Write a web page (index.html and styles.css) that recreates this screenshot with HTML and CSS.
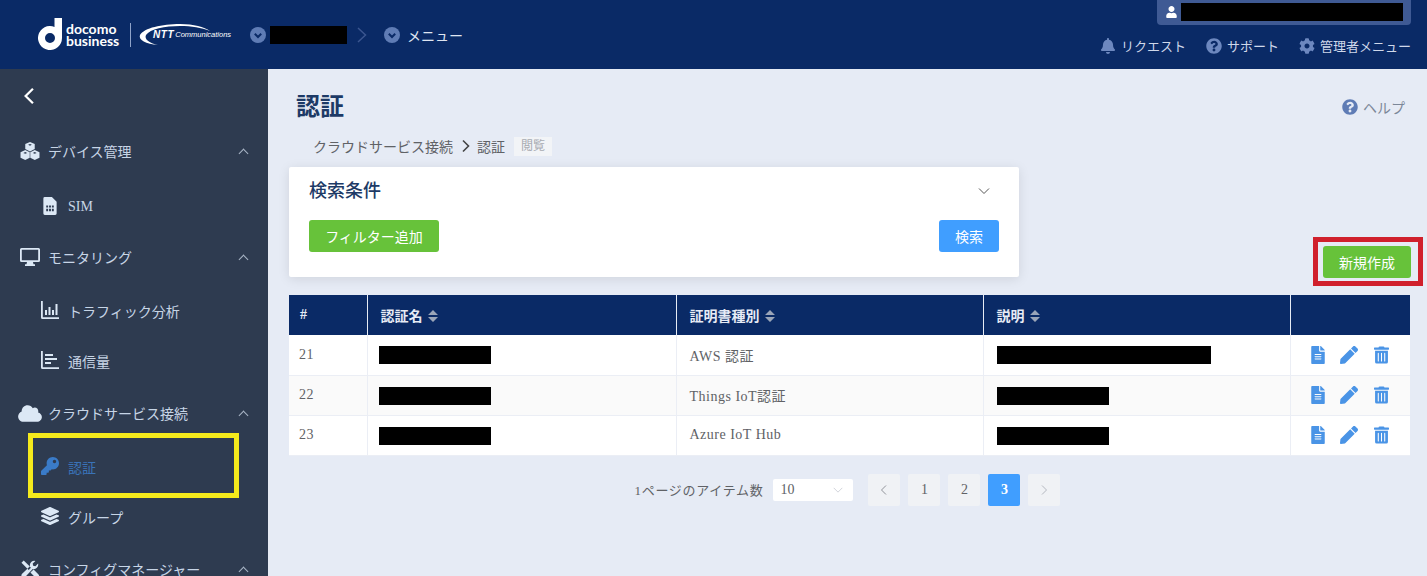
FILE: index.html
```html
<!DOCTYPE html>
<html lang="ja">
<head>
  <meta charset="UTF-8">
  <meta name="viewport" content="width=device-width, initial-scale=1.0">
  <title>認証</title>
  <link rel="stylesheet" href="styles.css">
</head>
<body>
  <svg class="sprite" xmlns="http://www.w3.org/2000/svg">
    <symbol id="i-bell" viewBox="0 0 448 512"><path d="M224 512c35.32 0 63.97-28.65 63.97-64H160.03c0 35.35 28.65 64 63.97 64zm215.39-149.71c-19.32-20.76-55.47-51.99-55.47-154.29 0-77.7-54.48-139.9-127.94-155.16V32c0-17.67-14.32-32-31.98-32s-31.98 14.33-31.98 32v20.84C118.56 68.1 64.08 130.3 64.08 208c0 102.3-36.15 133.53-55.47 154.29-6 6.45-8.66 14.16-8.61 21.71.11 16.4 12.98 32 32.1 32h383.8c19.12 0 32-15.6 32.1-32 .05-7.55-2.61-15.27-8.61-21.71z"/></symbol>
    <symbol id="i-question" viewBox="0 0 512 512"><path d="M504 256c0 136.997-111.043 248-248 248S8 392.997 8 256C8 119.083 119.043 8 256 8s248 111.083 248 248zM262.655 90c-54.497 0-89.255 22.957-116.549 63.758-3.536 5.286-2.353 12.415 2.715 16.258l34.699 26.31c5.205 3.947 12.621 3.008 16.665-2.122 17.864-22.658 30.113-35.797 57.303-35.797 20.429 0 45.698 13.148 45.698 32.958 0 14.976-12.363 22.667-32.534 33.976C247.128 238.528 216 254.941 216 296v4c0 6.627 5.373 12 12 12h56c6.627 0 12-5.373 12-12v-1.333c0-28.462 83.186-29.647 83.186-106.667 0-58.002-60.165-102-116.531-102zM256 338c-25.365 0-46 20.635-46 46 0 25.364 20.635 46 46 46s46-20.636 46-46c0-25.365-20.635-46-46-46z"/></symbol>
    <symbol id="i-cog" viewBox="0 0 512 512"><path d="M487.4 315.7l-42.6-24.6c4.3-23.2 4.3-47 0-70.2l42.6-24.6c4.9-2.8 7.1-8.6 5.5-14-11.1-35.6-30-67.8-54.7-94.6-3.8-4.1-10-5.1-14.8-2.3L380.8 110c-17.9-15.4-38.5-27.3-60.8-35.1V25.8c0-5.6-3.9-10.5-9.4-11.7-36.7-8.2-74.3-7.8-109.2 0-5.5 1.2-9.4 6.1-9.4 11.7V75c-22.2 7.9-42.8 19.8-60.8 35.1L88.7 85.5c-4.9-2.8-11-1.9-14.8 2.3-24.7 26.7-43.6 58.9-54.7 94.6-1.7 5.4.6 11.2 5.5 14L67.3 221c-4.3 23.2-4.3 47 0 70.2l-42.6 24.6c-4.9 2.8-7.1 8.6-5.5 14 11.1 35.6 30 67.8 54.7 94.6 3.8 4.1 10 5.1 14.8 2.3l42.6-24.6c17.9 15.4 38.5 27.3 60.8 35.1v49.2c0 5.6 3.9 10.5 9.4 11.7 36.7 8.2 74.3 7.8 109.2 0 5.5-1.2 9.4-6.1 9.4-11.7v-49.2c22.2-7.9 42.8-19.8 60.8-35.1l42.6 24.6c4.9 2.8 11 1.9 14.8-2.3 24.7-26.7 43.6-58.9 54.7-94.6 1.5-5.5-.7-11.3-5.6-14.1zM256 336c-44.1 0-80-35.9-80-80s35.9-80 80-80 80 35.9 80 80-35.9 80-80 80z"/></symbol>
    <symbol id="i-user" viewBox="0 0 448 512"><path d="M224 256c70.7 0 128-57.3 128-128S294.7 0 224 0 96 57.3 96 128s57.3 128 128 128zm89.6 32h-16.7c-22.2 10.2-46.9 16-72.9 16s-50.6-5.8-72.9-16h-16.7C60.2 288 0 348.2 0 422.4V464c0 26.5 21.5 48 48 48h352c26.5 0 48-21.5 48-48v-41.6c0-74.2-60.2-134.4-134.4-134.4z"/></symbol>
    <symbol id="i-down" viewBox="0 0 16 16"><circle cx="8" cy="8" r="8" fill="#5f7cb5"/><path d="M4.8 6.8 8 10l3.2-3.2" fill="none" stroke="#0a2a66" stroke-width="2"/></symbol>
    <symbol id="i-cubes" viewBox="0 0 20 19"><path d="M10 0l5 2.200v5.300L10 10 5 7.500V2.200z"/><path d="M5 8.500l4.700 2.200v6L5 19 0 16.700v-6z"/><path d="M15 8.500l5 2.200v6L15 19l-4.700-2.300v-6z"/><path fill="#2e3b50" d="M10 3.900l2-1-2-.9-2 .9zM5 12.500l2-1-2-.9-2 .9zM15 12.500l2-1-2-.9-2 .9z"/></symbol>
    <symbol id="i-sim" viewBox="0 0 14 19"><path fill-rule="evenodd" d="M1.500 0h7.500L14 5v12.500a1.500 1.500 0 0 1-1.500 1.500h-11A1.500 1.500 0 0 1 0 17.500v-16A1.500 1.500 0 0 1 1.500 0zM3 9v2h2V9zm3 0v2h2V9zm3 0v2h2V9zm-6 3.500v2.500h2v-2.500zm3 0v2.500h2v-2.500zm3 0v2.500h2v-2.500z"/></symbol>
    <symbol id="i-desktop" viewBox="0 0 20 18"><path fill-rule="evenodd" d="M1.500 0h17A1.500 1.500 0 0 1 20 1.500v11a1.500 1.500 0 0 1-1.500 1.500H13l.5 2.200h1.500V18H5v-1.800h1.500L7 14H1.500A1.500 1.500 0 0 1 0 12.500v-11A1.500 1.500 0 0 1 1.500 0zM1.800 1.800v10.400h16.400V1.800z"/></symbol>
    <symbol id="i-chart" viewBox="0 0 18 18"><path d="M0 0h1.800v16.200H18V18H1.500A1.500 1.500 0 0 1 0 16.500zM4 9h2v5H4zm3.500-3h2v8h-2zm3.500 3h2v5h-2zm3.500-6h2v11h-2z"/></symbol>
    <symbol id="i-lines" viewBox="0 0 18 18"><path d="M0 0h1.800v16.200H18V18H1.500A1.500 1.500 0 0 1 0 16.500zM4 3h8v2H4zm0 4h12v2H4zm0 4h6v2H4z"/></symbol>
    <symbol id="i-cloud" viewBox="0 0 640 512"><path d="M537.6 226.6c4.1-10.7 6.4-22.4 6.4-34.6 0-53-43-96-96-96-19.7 0-38.1 6-53.3 16.2C367 64.2 315.3 32 256 32c-88.4 0-160 71.6-160 160 0 2.7.1 5.4.2 8.1C40.2 219.8 0 273.2 0 336c0 79.5 64.5 144 144 144h368c70.7 0 128-57.3 128-128 0-61.9-44-113.6-102.4-125.4z"/></symbol>
    <symbol id="i-key" viewBox="0 0 512 512"><path d="M512 176.001C512 273.203 433.202 352 336 352c-11.22 0-22.19-1.062-32.827-3.069l-24.012 27.014A23.999 23.999 0 0 1 261.223 384H224v40c0 13.255-10.745 24-24 24h-40v40c0 13.255-10.745 24-24 24H24c-13.255 0-24-10.745-24-24v-78.059c0-6.365 2.529-12.47 7.029-16.971l161.802-161.802C163.108 213.814 160 195.271 160 176 160 78.798 238.797.001 335.999 0 433.488-.001 512 78.511 512 176.001zM336 128c0 26.51 21.49 48 48 48s48-21.49 48-48-21.49-48-48-48-48 21.49-48 48z"/></symbol>
    <symbol id="i-layers" viewBox="0 0 512 512"><path d="M12.41 148.02l232.94 105.67c6.8 3.09 14.49 3.09 21.29 0l232.94-105.67c16.55-7.51 16.55-32.52 0-40.03L266.65 2.31a25.607 25.607 0 0 0-21.29 0L12.41 107.98c-16.55 7.51-16.55 32.53 0 40.04zm487.18 88.28l-58.09-26.33-161.64 73.27c-7.56 3.43-15.59 5.17-23.86 5.17s-16.29-1.74-23.86-5.17L70.51 209.97l-58.1 26.33c-16.55 7.5-16.55 32.5 0 40l232.94 105.59c6.8 3.08 14.49 3.08 21.29 0L499.59 276.3c16.55-7.5 16.55-32.5 0-40zm0 127.8l-57.87-26.23-161.86 73.37c-7.56 3.43-15.59 5.17-23.86 5.17s-16.29-1.74-23.86-5.17L70.29 337.87 12.41 364.1c-16.55 7.5-16.55 32.5 0 40l232.94 105.59c6.8 3.08 14.49 3.08 21.29 0L499.59 404.1c16.55-7.5 16.55-32.5 0-40z"/></symbol>
    <symbol id="i-tools" viewBox="0 0 20 20"><path d="M.5 3 3 .5 9 6.500 11 8.500 8.500 11 2.500 5zM14 10.500l5.500 5.500a2.500 2.500 0 0 1-3.500 3.500L10.500 14zM19 4l-3 3-2.500-.5L13 4l3-3a5 5 0 0 0-6 6L1 15.500A2.500 2.500 0 0 0 4.500 19L13 10a5 5 0 0 0 6-6z"/></symbol>
    <symbol id="i-file" viewBox="0 0 384 512"><path d="M224 136V0H24C10.7 0 0 10.700 0 24v464c0 13.300 10.700 24 24 24h336c13.300 0 24-10.700 24-24V160H248c-13.200 0-24-10.800-24-24zm64 236c0 6.600-5.400 12-12 12H108c-6.600 0-12-5.400-12-12v-8c0-6.600 5.400-12 12-12h168c6.600 0 12 5.400 12 12v8zm0-64c0 6.600-5.400 12-12 12H108c-6.600 0-12-5.400-12-12v-8c0-6.600 5.400-12 12-12h168c6.600 0 12 5.400 12 12v8zm0-72v8c0 6.600-5.400 12-12 12H108c-6.600 0-12-5.400-12-12v-8c0-6.600 5.400-12 12-12h168c6.600 0 12 5.400 12 12zm96-114.100v6.100H256V0h6.100c6.400 0 12.500 2.500 17 7l97.900 98c4.500 4.500 7 10.600 7 16.900z"/></symbol>
    <symbol id="i-pen" viewBox="0 0 512 512"><path d="M290.74 93.24l128.02 128.02-277.99 277.99-114.14 12.6C11.35 513.54-1.56 500.62.14 485.34l12.7-114.22 277.9-277.88zm207.2-19.06l-60.11-60.11c-18.75-18.75-49.16-18.75-67.91 0l-56.55 56.55 128.02 128.02 56.55-56.55c18.75-18.76 18.75-49.16 0-67.91z"/></symbol>
    <symbol id="i-trash" viewBox="0 0 448 512"><path d="M32 464a48 48 0 0 0 48 48h288a48 48 0 0 0 48-48V128H32zm272-256a16 16 0 0 1 32 0v224a16 16 0 0 1-32 0zm-96 0a16 16 0 0 1 32 0v224a16 16 0 0 1-32 0zm-96 0a16 16 0 0 1 32 0v224a16 16 0 0 1-32 0zM432 32H312l-9.400-18.700A24 24 0 0 0 281.100 0H166.800a23.720 23.720 0 0 0-21.400 13.300L136 32H16A16 16 0 0 0 0 48v32a16 16 0 0 0 16 16h416a16 16 0 0 0 16-16V48a16 16 0 0 0-16-16z"/></symbol>
    <symbol id="i-sort" viewBox="0 0 10 12"><path d="M5 0l5 5H0zM5 12 0 7h10z"/></symbol>
  </svg>

  <header class="topbar">
    <div class="logo">
      <svg class="logo-d" viewBox="0 0 24 32"><path fill-rule="evenodd" d="M16.500 0H24v20a12 12 0 1 1-7.500-11.100zM12 15a5 5 0 1 0 0 10 5 5 0 0 0 0-10z"/></svg>
      <div class="logo-text">docomo<br>business</div>
      <div class="logo-sep"></div>
      <div class="ntt">
        <svg class="ntt-swoosh" viewBox="0 0 80 23"><path d="M2 12C6 5 24 1 42 1c14 0 24 3 30 7-9-3.500-18-5-30-5C27 3 12 6 8 12c-2 4 3 8 12 10C8 21 0 17 2 12z"/></svg>
        <span class="ntt-name">NTT</span><span class="ntt-sub">Communications</span>
      </div>
    </div>
    <nav class="crumbs">
      <svg class="ico-16"><use href="#i-down"/></svg>
      <span class="redact redact-org"></span>
      <svg class="crumb-sep" viewBox="0 0 10 16"><path d="M1 1l7.500 7L1 15" fill="none" stroke="#3b5690" stroke-width="1.500"/></svg>
      <svg class="ico-16"><use href="#i-down"/></svg>
      <span class="crumb-text">メニュー</span>
    </nav>
    <div class="top-right">
      <div class="userbox">
        <svg class="ico-user"><use href="#i-user"/></svg>
        <span class="redact redact-user"></span>
      </div>
      <div class="top-links">
        <a class="top-link"><svg class="ico-16"><use href="#i-bell"/></svg>リクエスト</a>
        <a class="top-link"><svg class="ico-16"><use href="#i-question"/></svg>サポート</a>
        <a class="top-link"><svg class="ico-16"><use href="#i-cog"/></svg>管理者メニュー</a>
      </div>
    </div>
  </header>

  <div class="body-wrap">
    <aside class="sidebar">
      <div class="back">
        <svg viewBox="0 0 10 16"><path d="M8.500 1.500 2 8l6.500 6.500" fill="none" stroke="#fff" stroke-width="2"/></svg>
      </div>
      <ul class="menu">
        <li class="menu-group"><svg class="menu-ico"><use href="#i-cubes"/></svg><span>デバイス管理</span><i class="caret"></i></li>
        <li class="menu-item menu-sim"><svg class="sub-ico"><use href="#i-sim"/></svg><span>SIM</span></li>
        <li class="menu-group"><svg class="menu-ico"><use href="#i-desktop"/></svg><span>モニタリング</span><i class="caret"></i></li>
        <li class="menu-item"><svg class="sub-ico"><use href="#i-chart"/></svg><span>トラフィック分析</span></li>
        <li class="menu-item"><svg class="sub-ico"><use href="#i-lines"/></svg><span>通信量</span></li>
        <li class="menu-group"><svg class="menu-ico menu-cloud"><use href="#i-cloud"/></svg><span>クラウドサービス接続</span><i class="caret"></i></li>
        <li class="menu-item active"><svg class="sub-ico"><use href="#i-key"/></svg><span>認証</span></li>
        <li class="menu-item"><svg class="sub-ico"><use href="#i-layers"/></svg><span>グループ</span></li>
        <li class="menu-group"><svg class="menu-ico"><use href="#i-tools"/></svg><span>コンフィグマネージャー</span><i class="caret"></i></li>
      </ul>
    </aside>

    <main class="content">
      <div class="title-row">
        <h1>認証</h1>
        <a class="help"><svg class="ico-16"><use href="#i-question"/></svg>ヘルプ</a>
      </div>
      <div class="path">
        <span>クラウドサービス接続</span>
        <svg class="path-sep" viewBox="0 0 10 14"><path d="M2 1.500 7.500 7 2 12.500" fill="none" stroke="#444" stroke-width="1.600"/></svg>
        <span>認証</span>
        <span class="badge">閲覧</span>
      </div>

      <div class="toolbar">
        <section class="search-card">
          <div class="search-head">
            <h2>検索条件</h2>
            <svg class="search-toggle" viewBox="0 0 12 8"><path d="M1 1.500 6 6.500l5-5" fill="none" stroke="#555" stroke-width="1"/></svg>
          </div>
          <div class="search-actions">
            <button class="btn btn-green btn-filter">フィルター追加</button>
            <button class="btn btn-blue btn-search">検索</button>
          </div>
        </section>
        <button class="btn btn-green btn-create">新規作成</button>
      </div>

      <table class="grid">
        <colgroup>
          <col class="col-no"><col class="col-name"><col class="col-type"><col class="col-desc"><col class="col-act">
        </colgroup>
        <thead>
          <tr>
            <th>#</th>
            <th>認証名<svg class="sort"><use href="#i-sort"/></svg></th>
            <th>証明書種別<svg class="sort"><use href="#i-sort"/></svg></th>
            <th>説明<svg class="sort"><use href="#i-sort"/></svg></th>
            <th></th>
          </tr>
        </thead>
        <tbody>
          <tr>
            <td>21</td>
            <td><span class="redact redact-cell"></span></td>
            <td>AWS 認証</td>
            <td><span class="redact redact-long"></span></td>
            <td class="acts"><svg class="act act-file"><use href="#i-file"/></svg><svg class="act"><use href="#i-pen"/></svg><svg class="act act-trash"><use href="#i-trash"/></svg></td>
          </tr>
          <tr class="alt">
            <td>22</td>
            <td><span class="redact redact-cell"></span></td>
            <td>Things IoT認証</td>
            <td><span class="redact redact-cell"></span></td>
            <td class="acts"><svg class="act act-file"><use href="#i-file"/></svg><svg class="act"><use href="#i-pen"/></svg><svg class="act act-trash"><use href="#i-trash"/></svg></td>
          </tr>
          <tr>
            <td>23</td>
            <td><span class="redact redact-cell"></span></td>
            <td>Azure IoT Hub</td>
            <td><span class="redact redact-cell"></span></td>
            <td class="acts"><svg class="act act-file"><use href="#i-file"/></svg><svg class="act"><use href="#i-pen"/></svg><svg class="act act-trash"><use href="#i-trash"/></svg></td>
          </tr>
        </tbody>
      </table>

      <div class="pager">
        <span class="pager-label">1ページのアイテム数</span>
        <div class="pager-select">
          <span>10</span>
          <svg viewBox="0 0 14 8"><path d="M1 1l6 6 6-6" fill="none" stroke="#c0c4cc" stroke-width="1"/></svg>
        </div>
        <div class="pager-pages">
          <a class="page dim"><svg viewBox="0 0 8 12"><path d="M6 1.500 1.500 6 6 10.500" fill="none" stroke="#909399" stroke-width="1"/></svg></a>
          <a class="page">1</a>
          <a class="page">2</a>
          <a class="page current">3</a>
          <a class="page dim"><svg viewBox="0 0 8 12"><path d="M2 1.500 6.500 6 2 10.500" fill="none" stroke="#b4b8c0" stroke-width="1"/></svg></a>
        </div>
      </div>
    </main>
  </div>

  <!-- annotation boxes drawn over the screen capture -->
  <div class="mark mark-yellow"></div>
  <div class="mark mark-red"></div>
</body>
</html>
```

FILE: styles.css
```css
html, body {
  margin: 0;
  height: 576px;
  overflow: hidden;
}

body {
  position: relative;
  font-family: "Liberation Serif", "Noto Sans CJK JP", serif;
  font-size: 14px;
  color: #606266;
  background-color: #e6ebf5;
}

.sprite { display: none; }

.redact {
  display: inline-block;
  background-color: #000;
}

.ico-16 {
  width: 16px;
  height: 16px;
  flex: none;
}

/* header */
.topbar {
  height: 69px;
  display: flex;
  align-items: center;
  background-color: #0a2a66;
  font-family: "Noto Sans CJK JP", sans-serif;
  color: #fff;
}

.logo {
  display: flex;
  align-items: center;
  margin-left: 38px;
  width: 212px;
  flex: none;
  fill: #fff;
}

.logo-d {
  width: 24px;
  height: 32px;
  margin-top: -2px;
}

.logo-text {
  margin-left: 4px;
  font-family: Lato, sans-serif;
  font-weight: 700;
  font-size: 14px;
  line-height: 12px;
  width: 58px;
}

.logo-sep {
  width: 1px;
  height: 24px;
  background-color: #8fa3c9;
  margin-left: 6px;
}

.ntt {
  position: relative;
  margin-left: 7px;
  width: 93px;
  height: 23px;
  display: flex;
  align-items: center;
  padding-left: 15px;
  box-sizing: border-box;
  font-family: "Liberation Sans", sans-serif;
}

.ntt-swoosh {
  position: absolute;
  left: 0;
  top: 0;
  width: 80px;
  height: 23px;
}

.ntt-name {
  font-size: 10px;
  font-weight: 700;
  font-style: italic;
  letter-spacing: .6px;
}

.ntt-sub {
  font-size: 7.5px;
  font-style: italic;
  margin-left: 1px;
}

.crumbs {
  display: flex;
  align-items: center;
}

.redact-org {
  width: 77px;
  height: 18px;
  margin-left: 4px;
  margin-right: 10px;
}

.crumb-sep {
  width: 10px;
  height: 16px;
  margin-right: 17px;
}

.crumb-text {
  margin-left: 7px;
  font-size: 14px;
  color: #dfe5f1;
}

.top-right {
  margin-left: auto;
  margin-right: 16px;
  align-self: flex-start;
  display: flex;
  flex-direction: column;
  align-items: flex-end;
}

.userbox {
  width: 254px;
  height: 25px;
  box-sizing: border-box;
  padding: 3px 8px 4px 9px;
  display: flex;
  align-items: center;
  background-color: #3f5a94;
  border-radius: 0 0 4px 4px;
}

.ico-user {
  width: 11px;
  height: 12px;
  fill: #fff;
  margin-right: 4px;
}

.redact-user {
  flex: 1;
  height: 18px;
}

.top-links {
  display: flex;
  gap: 20px;
  margin-top: 11px;
}

.top-link {
  display: flex;
  align-items: center;
  gap: 5px;
  font-size: 13px;
  line-height: 20px;
  color: #cfd8ea;
  fill: #6d88bf;
}

/* sidebar */
.body-wrap {
  display: flex;
  height: 507px;
}

.sidebar {
  width: 268px;
  flex: none;
  background-color: #2e3b50;
  color: #c7d5e6;
  overflow: hidden;
}

.back {
  height: 53px;
  padding-left: 23px;
  display: flex;
  align-items: center;
}

.back svg {
  width: 12px;
  height: 18px;
}

.menu {
  list-style: none;
  margin: 0;
  padding: 4px 0 0;
}

.menu-group {
  height: 50px;
  padding: 0 20px;
  display: flex;
  align-items: center;
  fill: #dce8f5;
  font-size: 14px;
}

.menu-item + .menu-group { margin-top: 3px; }
.menu-group + .menu-item { margin-top: 3px; }
.menu-group + .menu-sim { margin-top: 5px; }
.menu-sim + .menu-group { margin-top: 1px; }

.menu-ico {
  width: 20px;
  height: 18px;
  margin-right: 8px;
  flex: none;
}

.menu-cloud {
  width: 24px;
  height: 19px;
  margin-left: -2px;
  margin-right: 6px;
}

.caret {
  width: 6px;
  height: 6px;
  margin-left: auto;
  margin-right: 1px;
  margin-top: 4px;
  border-left: 1px solid #aab6c6;
  border-top: 1px solid #aab6c6;
  transform: rotate(45deg);
}

.menu-item {
  height: 50px;
  padding-left: 41px;
  display: flex;
  align-items: center;
  fill: #dce8f5;
  font-size: 14px;
}

.menu-item span { padding-top: 2px; }

.sub-ico {
  width: 18px;
  height: 18px;
  margin-right: 9px;
  flex: none;
}

.menu-item.active {
  color: #3a73b8;
  fill: #3a7bc8;
}

/* main area */
.content {
  flex: 1;
  min-width: 0;
  padding: 0 17px 0 21px;
}

.title-row {
  display: flex;
  align-items: center;
  justify-content: space-between;
  padding: 22px 0 12px 7px;
}

h1 {
  margin: 0;
  font-size: 24px;
  line-height: 32px;
  font-weight: 700;
  color: #1d3a66;
}

.help {
  display: flex;
  align-items: center;
  gap: 5px;
  margin-right: 5px;
  font-size: 14px;
  color: #7c8798;
  fill: #5f7cb5;
}

.path {
  height: 22px;
  display: flex;
  align-items: center;
  padding-left: 24px;
  color: #606266;
  font-size: 14px;
}

.path-sep {
  width: 10px;
  height: 14px;
  margin: 0 6px 0 8px;
}

.badge {
  margin-left: 9px;
  width: 38px;
  height: 19px;
  line-height: 19px;
  text-align: center;
  background-color: #f2f4f7;
  color: #a8abb2;
  font-size: 12px;
}

.toolbar {
  display: flex;
  align-items: flex-end;
  justify-content: space-between;
  margin-top: 10px;
}

.search-card {
  width: 730px;
  height: 110px;
  box-sizing: border-box;
  padding: 9px 20px 0;
  background-color: #fff;
  border-radius: 2px;
  box-shadow: 0 2px 12px rgba(0,0,0,0.1);
}

.search-head {
  height: 30px;
  display: flex;
  align-items: center;
  justify-content: space-between;
}

h2 {
  margin: 0;
  font-size: 18px;
  line-height: 30px;
  font-weight: 500;
  color: #1d3a66;
}

.search-toggle {
  width: 12px;
  height: 8px;
  margin-right: 9px;
}

.search-actions {
  display: flex;
  justify-content: space-between;
  margin-top: 14px;
}

.btn {
  height: 32px;
  padding: 0;
  border: none;
  border-radius: 3px;
  color: #fff;
  font-family: "Noto Sans CJK JP", sans-serif;
  font-size: 14px;
}

.btn-green { background-color: #67c23a; }
.btn-blue { background-color: #409eff; }
.btn-filter { width: 130px; }
.btn-search { width: 60px; }

.btn-create {
  width: 88px;
  margin: 0 -1px -1px 0;
}

.grid {
  width: 1121px;
  margin-top: 18px;
  border-collapse: collapse;
  table-layout: fixed;
  background-color: #fff;
}

.col-no { width: 78px; }
.col-name { width: 309px; }
.col-type { width: 307px; }
.col-desc { width: 307px; }
.col-act { width: 120px; }

.grid th {
  height: 40px;
  padding: 0 13px;
  box-sizing: border-box;
  text-align: left;
  background-color: #0a2a66;
  color: #e6ebf5;
  font-size: 14px;
  font-weight: 700;
  border-left: 1px solid #e6ebf5;
}

.grid th:first-child { padding-left: 11px; border-left: none; }

.grid td {
  height: 40px;
  padding: 0 13px;
  box-sizing: border-box;
  border-left: 1px solid #ebeef5;
  border-bottom: 1px solid #ebeef5;
  font-size: 14px;
  letter-spacing: .5px;
}

.grid td:first-child { padding-left: 10px; border-left: none; }

.grid .alt td { background-color: #fafafa; }

.sort {
  width: 10px;
  height: 12px;
  margin-left: 5px;
  vertical-align: -1px;
  fill: #9aa5b8;
}

.redact-cell,
.redact-long {
  display: block;
  height: 18px;
  width: 112px;
}

.redact-long { width: 214px; }

.grid tr + tr .redact { margin-top: 2px; }
.grid td:nth-child(2) .redact { margin-left: -2px; }

.grid .acts {
  padding: 0 0 0 20px;
  fill: #4a94e6;
  white-space: nowrap;
}

.act {
  width: 18px;
  height: 18px;
  margin-right: 16px;
  vertical-align: middle;
}

.act-file { width: 14px; margin-right: 15px; }
.act-trash { width: 15px; margin-right: 0; }

.pager {
  display: flex;
  align-items: center;
  justify-content: center;
  height: 32px;
  margin: 18px 0 0 -4px;
}

.pager-label {
  font-size: 13px;
  letter-spacing: .7px;
}

.pager-select {
  width: 80px;
  height: 22px;
  box-sizing: border-box;
  margin-left: 10px;
  padding: 0 7px;
  display: flex;
  align-items: center;
  justify-content: space-between;
  background-color: #fff;
  border-radius: 2px;
  font-size: 14px;
}

.pager-select svg {
  width: 10px;
  height: 6px;
  margin-right: 3px;
}

.pager-pages {
  display: flex;
  gap: 8px;
  margin-left: 15px;
}

.page {
  width: 32px;
  height: 32px;
  display: flex;
  align-items: center;
  justify-content: center;
  background-color: #f0f2f5;
  border-radius: 2px;
  font-size: 14px;
}

.page svg {
  width: 8px;
  height: 12px;
}

.page.current {
  background-color: #409eff;
  color: #fff;
  font-weight: 700;
}

.mark {
  position: absolute;
  box-sizing: border-box;
}

.mark-yellow {
  left: 28px;
  top: 433px;
  width: 211px;
  height: 65px;
  border: 5px solid #f5ea1c;
}

.mark-red {
  left: 1313px;
  top: 237px;
  width: 110px;
  height: 49px;
  border: 5px solid #d0202c;
}
```
